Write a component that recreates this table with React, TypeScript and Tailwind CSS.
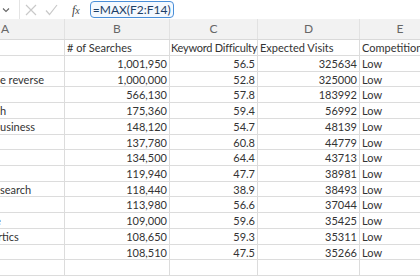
import React from "react"

const ROWS: { a: string; aShift?: number; b: string; c: string; d: string }[] = [
  { a: "", b: "1,001,950", c: "56.5", d: "325634" },
  { a: "e reverse", b: "1,000,000", c: "52.8", d: "325000" },
  { a: "", b: "566,130", c: "57.8", d: "183992" },
  { a: "h", b: "175,360", c: "59.4", d: "56992" },
  { a: "usiness", b: "148,120", c: "54.7", d: "48139" },
  { a: "", b: "137,780", c: "60.8", d: "44779" },
  { a: "", b: "134,500", c: "64.4", d: "43713" },
  { a: "", b: "119,940", c: "47.7", d: "38981" },
  { a: "search", b: "118,440", c: "38.9", d: "38493" },
  { a: "", b: "113,980", c: "56.6", d: "37044" },
  { a: "e", aShift: -5, b: "109,000", c: "59.6", d: "35425" },
  { a: "rtics", aShift: -2, b: "108,650", c: "59.3", d: "35311" },
  { a: "", b: "108,510", c: "47.5", d: "35266" },
  { a: "", b: "", c: "", d: "" },
]

const cols = "grid grid-cols-[65px_105px_88px_102px_80px]"

export default function App() {
  return (
    <div className="w-[420px] h-[280px] overflow-hidden bg-white text-[#333] font-['Lato','Open_Sans',sans-serif] text-[11px]">
      {/* formula bar */}
      <div className="h-[19px] flex items-center">
        <div className="w-[20px] h-full flex items-center pl-[2px] border-r border-[#e4e4e4]">
          <svg width="8" height="6" viewBox="0 0 8 6">
            <path d="M1 1.5 L4 4.5 L7 1.5" fill="none" stroke="#666" strokeWidth="1.1" />
          </svg>
        </div>
        <svg width="12" height="12" viewBox="0 0 12 12" className="ml-[5px]">
          <path d="M1 1 L11 11 M11 1 L1 11" stroke="#c9c9c9" strokeWidth="1.2" />
        </svg>
        <svg width="13" height="12" viewBox="0 0 13 12" className="ml-[8px]">
          <path d="M1 6.5 L4.5 10.5 L12 1" fill="none" stroke="#c9c9c9" strokeWidth="1.2" />
        </svg>
        <span className="ml-[14px] font-['Liberation_Serif',serif] italic text-[12px] text-[#444] leading-none">
          f<span className="text-[10px]">x</span>
        </span>
        <div className="ml-[10px] h-[17px] px-[2px] flex items-center rounded-[4px] border-[1.5px] border-[#4a8fd8] bg-[#f4f9ff] text-[#1d3f66] text-[12px] leading-none">
          =MAX(F2:F14)
        </div>
      </div>

      {/* column letters */}
      <div className={`${cols} h-[21px] bg-[#f2f2f2] text-[#666] text-[12px] border-b border-[#d9d9d9]`}>
        <div className="flex items-center pl-[1px] border-r border-[#e2e2e2]">A</div>
        <div className="flex items-center justify-center border-r border-[#e2e2e2]">B</div>
        <div className="flex items-center justify-center border-r border-[#e2e2e2]">C</div>
        <div className="flex items-center justify-center border-r border-[#e2e2e2]">D</div>
        <div className="flex items-center justify-center">E</div>
      </div>

      {/* header row */}
      <div className={`${cols} h-[16px] border-b border-[#dcdcdc] whitespace-nowrap`}>
        <div className="border-r border-[#dcdcdc]" />
        <div className="pl-[2px] flex items-center border-r border-[#dcdcdc]">
          # of Searches
        </div>
        <div className="pl-[1px] flex items-center border-r border-[#dcdcdc] tracking-[-0.25px]">
          Keyword Difficulty
        </div>
        <div className="pl-[2px] flex items-center border-r border-[#dcdcdc]">
          Expected Visits
        </div>
        <div className="pl-[2px] flex items-center">Competition</div>
      </div>

      {ROWS.map((r, i) => (
        <div
          key={i}
          className={`${cols} h-[15.72px] border-b border-[#dcdcdc] whitespace-nowrap`}
        >
          <div className="border-r border-[#dcdcdc] flex items-center overflow-hidden">
            <span style={r.aShift ? { marginLeft: r.aShift } : undefined}>{r.a}</span>
          </div>
          <div className="flex items-center justify-end pr-[2px] border-r border-[#dcdcdc]">
            {r.b}
          </div>
          <div className="flex items-center justify-end pr-[2px] border-r border-[#dcdcdc]">
            {r.c}
          </div>
          <div className="flex items-center justify-end pr-[2px] border-r border-[#dcdcdc]">
            {r.d}
          </div>
          <div className="flex items-center pl-[2px]">{r.d ? "Low" : ""}</div>
        </div>
      ))}
    </div>
  )
}
